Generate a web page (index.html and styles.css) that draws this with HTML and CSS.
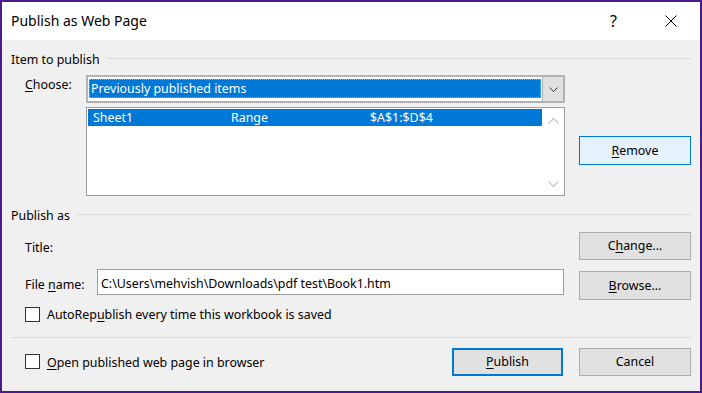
FILE: index.html
```html
<!DOCTYPE html>
<html lang="en">
<head>
<meta charset="utf-8">
<title>Publish as Web Page</title>
<link rel="stylesheet" href="styles.css">
</head>
<body>
<div class="window">
  <div class="titlebar">
    <span class="title">Publish as Web Page</span>
    <span class="tb-btn help">?</span>
    <span class="tb-btn close">
      <svg width="12" height="12" viewBox="0 0 12 12"><path d="M0.5 0.5 L11.5 11.5 M11.5 0.5 L0.5 11.5" stroke="#000" stroke-width="1" fill="none"/></svg>
    </span>
  </div>
  <div class="body">
    <div class="group-head"><span>Item to publish</span><span class="rule"></span></div>
    <div class="item-grid">
      <span class="lbl choose-lbl"><u>C</u>hoose:</span>
      <div class="combo">
        <div class="combo-field"><span class="combo-value">Previously published items</span></div>
        <div class="combo-btn">
          <svg width="9" height="5" viewBox="0 0 9 5"><path d="M0.5 0.5 L4.5 4.5 L8.5 0.5" stroke="#333" stroke-width="1" fill="none"/></svg>
        </div>
      </div>
      <div class="listbox">
        <div class="list-rows">
          <div class="list-row selected"><span>Sheet1</span><span>Range</span><span>$A$1:$D$4</span></div>
        </div>
        <div class="scrollbar">
          <svg width="11" height="6" viewBox="0 0 11 6"><path d="M0.5 5.5 L5.5 0.5 L10.5 5.5" stroke="#c4c4c4" stroke-width="1.2" fill="none"/></svg>
          <svg width="11" height="6" viewBox="0 0 11 6"><path d="M0.5 0.5 L5.5 5.5 L10.5 0.5" stroke="#c4c4c4" stroke-width="1.2" fill="none"/></svg>
        </div>
      </div>
      <button class="btn remove"><u>R</u>emove</button>
    </div>

    <div class="group-head publish-head"><span>Publish as</span><span class="rule"></span></div>
    <div class="pub-grid">
      <span class="lbl title-lbl">Title:</span>
      <button class="btn change">C<u>h</u>ange...</button>
      <span class="lbl file-lbl">File <u>n</u>ame:</span>
      <div class="textbox">C:\Users\mehvish\Downloads\pdf test\Book1.htm</div>
      <button class="btn browse"><u>B</u>rowse...</button>
      <div class="check auto"><span class="box"></span><span class="check-text">AutoRep<u>u</u>blish every time this workbook is saved</span></div>
    </div>

    <div class="sep"></div>

    <div class="footer">
      <div class="check open"><span class="box"></span><span class="check-text"><u>O</u>pen published web page in browser</span></div>
      <button class="btn primary"><u>P</u>ublish</button>
      <button class="btn cancel">Cancel</button>
    </div>
  </div>
</div>
</body>
</html>
```

FILE: styles.css
```css
* { box-sizing: border-box; }
html, body { margin: 0; padding: 0; }
body {
  width: 702px;
  height: 393px;
  overflow: hidden;
  font-family: "Noto Sans", "Segoe UI", sans-serif;
  font-size: 12.4px;
  color: #000;
  background: #f0f0f0;
}
u { text-decoration: underline; text-underline-offset: 2px; text-decoration-thickness: 1px; }

.window {
  width: 702px;
  height: 393px;
  border: 2px solid #4b1b8b;
  background: #f0f0f0;
  display: flex;
  flex-direction: column;
}

.titlebar {
  flex: none;
  height: 38px;
  background: #fff;
  display: flex;
  align-items: center;
  padding: 0 6px 0 9px;
}
.title { flex: 1; font-size: 14px; line-height: 20px; }
.tb-btn {
  width: 46px;
  height: 38px;
  display: flex;
  align-items: center;
  justify-content: center;
}
.help { font-size: 16px; margin-right: 10px; padding-right: 3px; padding-bottom: 1px; }

.body { flex: 1; padding: 12px 9px 0 9px; }

.group-head {
  display: flex;
  align-items: flex-start;
  height: 16px;
  line-height: 16px;
  gap: 7px;
}
.group-head .rule { flex: 1; height: 1px; background: #dadada; margin-top: 6px; }
.publish-head { margin-top: 12px; }

.lbl { line-height: 16px; align-self: start; }

.item-grid {
  display: grid;
  margin-top: 7px;
  padding-left: 14px;
  grid-template-columns: 61px 479px 14px 112px;
  grid-template-rows: 28px 89px;
  row-gap: 4px;
}
.choose-lbl { grid-column: 1; grid-row: 1; margin-top: 2px; }

.combo {
  grid-column: 2;
  grid-row: 1;
  display: flex;
  border: 2px solid #b3b3b3;
  background: #fff;
}
.combo-field { flex: 1; padding: 2px 1px 3px 1px; display: flex; }
.combo-value {
  flex: 1;
  background: #0078d7;
  color: #fff;
  border: 1px dotted #f5a623;
  line-height: 17px;
  padding-left: 1px;
}
.combo-btn {
  width: 21px;
  background: #e1e1e1;
  border-left: 1px solid #b3b3b3;
  display: flex;
  align-items: center;
  justify-content: center;
}

.listbox {
  grid-column: 2;
  grid-row: 2;
  display: flex;
  border: 1px solid #9c9c9c;
  background: #fff;
}
.list-rows { flex: 1; padding: 1px; }
.list-row {
  display: grid;
  grid-template-columns: 138px 139px 1fr;
  height: 17px;
  line-height: 17px;
  padding-left: 5px;
}
.list-row.selected { background: #0078d7; color: #fff; }
.scrollbar {
  width: 21px;
  display: flex;
  flex-direction: column;
  justify-content: space-between;
  align-items: center;
  padding: 10px 0 8px 0;
}

.btn {
  font: inherit;
  color: #000;
  margin: 0;
  padding: 0;
  background: #e1e1e1;
  border: 1px solid #adadad;
  height: 28px;
  line-height: 16px;
  text-align: center;
}
.remove {
  grid-column: 4;
  grid-row: 2;
  align-self: start;
  margin-top: 29px;
  height: 29px;
  background: #e5f1fb;
  border-color: #0078d7;
}

.pub-grid {
  display: grid;
  margin-top: 8px;
  padding-left: 14px;
  grid-template-columns: 72px 467px 15px 112px;
  grid-template-rows: 28px 31px auto;
  row-gap: 9px;
}
.title-lbl { grid-column: 1; grid-row: 1; margin-top: 8px; }
.change { grid-column: 4; grid-row: 1; }
.file-lbl { grid-column: 1; grid-row: 2; margin-top: 8px; }
.textbox {
  grid-column: 2;
  grid-row: 2;
  align-self: start;
  height: 26px;
  border: 1px solid #9c9c9c;
  background: #fff;
  padding: 6px 0 0 3px;
  line-height: 16px;
  white-space: nowrap;
}
.browse { grid-column: 4; grid-row: 2; align-self: start; margin-top: 2px; height: 29px; }
.auto { grid-column: 1 / 5; grid-row: 3; margin-top: -2px; }

.check { display: flex; align-items: flex-start; gap: 7px; line-height: 16px; }
.box {
  width: 15px;
  height: 15px;
  border: 1px solid #333;
  background: #fff;
  flex: none;
}

.sep { height: 1px; background: #dadada; margin-top: 14px; }

.footer {
  display: flex;
  align-items: flex-start;
  margin-top: 10px;
  padding-left: 14px;
}
.open { flex: 1; margin-top: 6px; }
.open .check-text { margin-top: 1px; }
.primary { width: 111px; border: 2px solid #0078d7; margin-right: 16px; }
.cancel { width: 112px; }
```
